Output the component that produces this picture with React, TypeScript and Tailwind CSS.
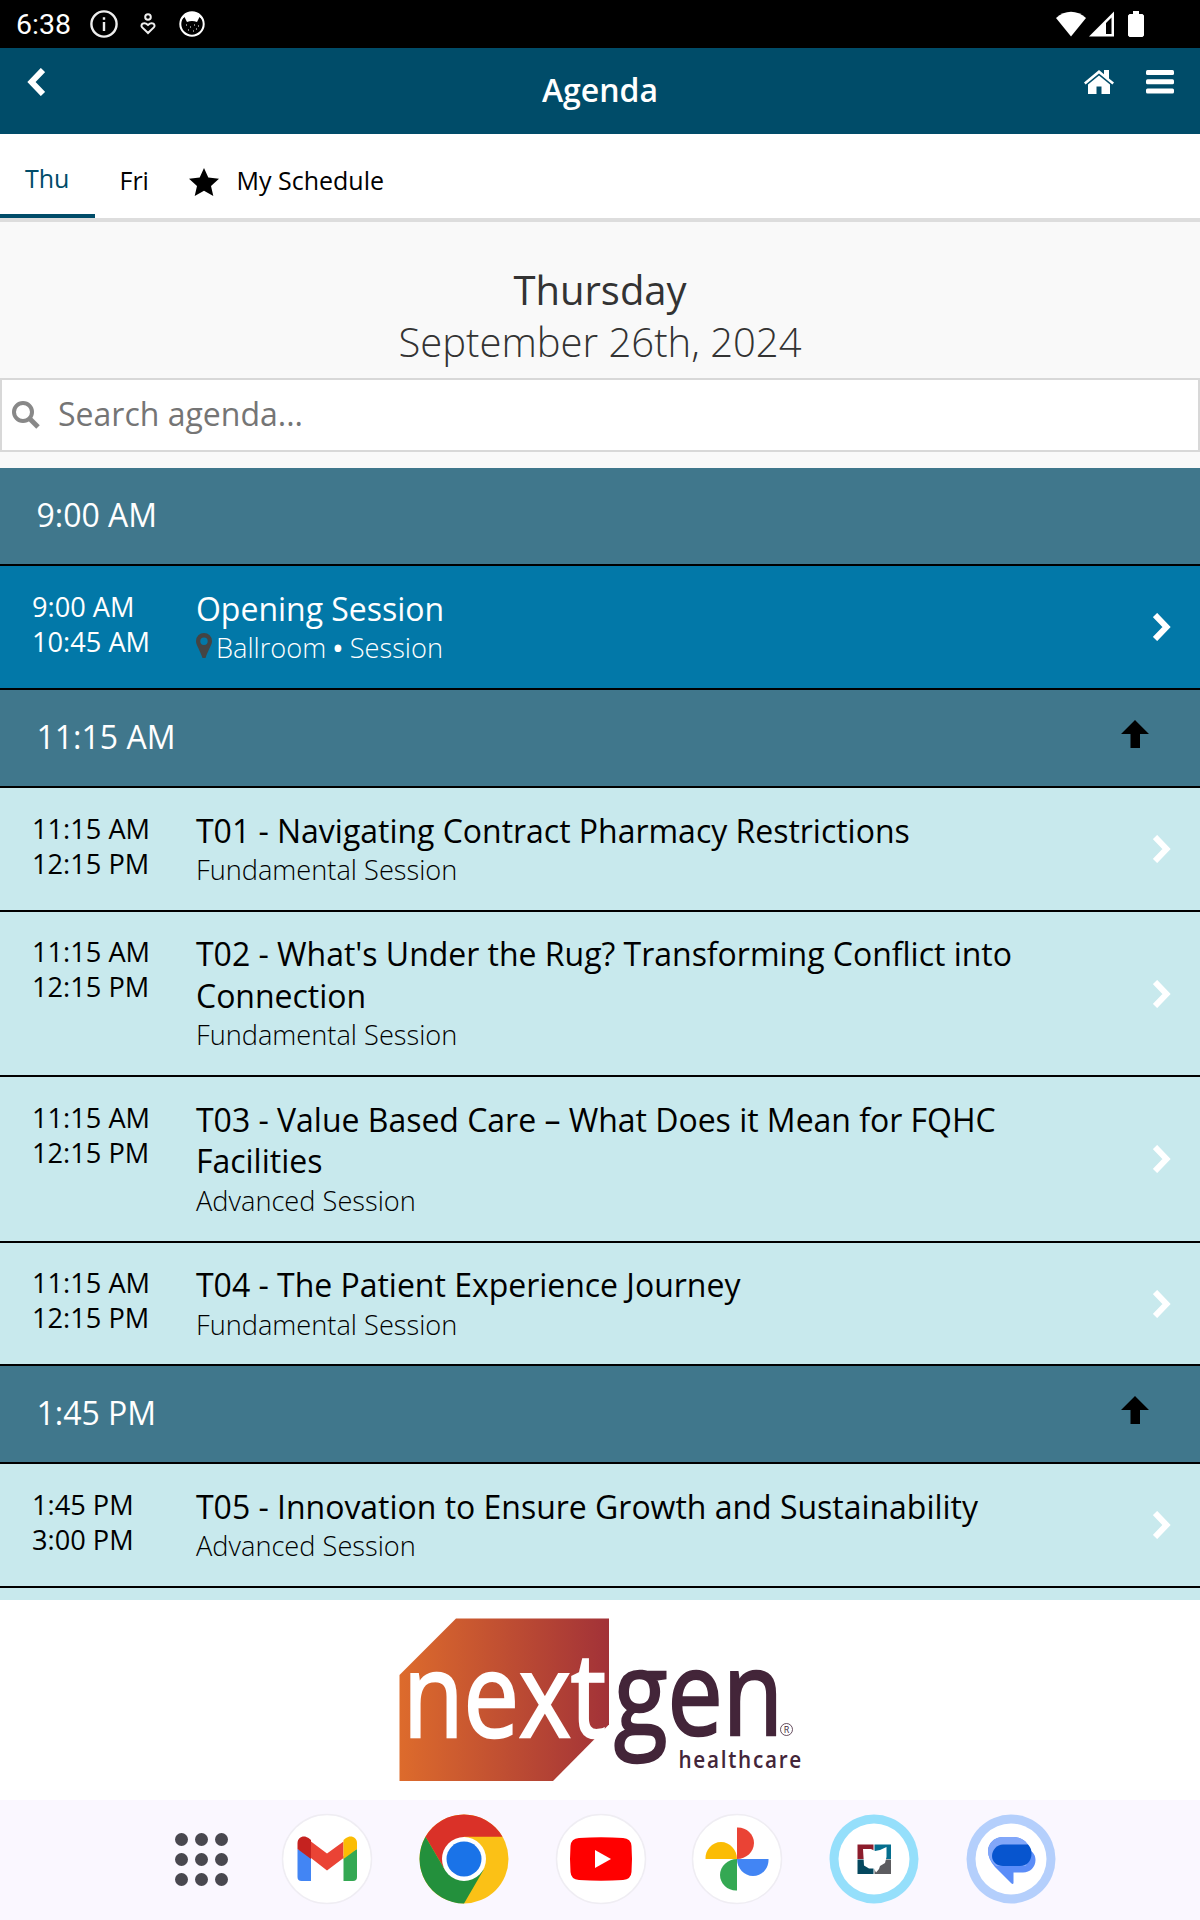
import React from 'react';

type Session = {
    start: string;
    end: string;
    title: string;
    kind: string;
    location?: string;
    height: string;
    timePad: string;
    titlePad: string;
};

type Slot = {
    time: string;
    jump: boolean;
    sessions: Session[];
};

const regular = { height: 'h-[124px]', timePad: 'pt-[23px]', titlePad: 'pt-[22px]' };

const slots: Slot[] = [
    {
        time: '9:00 AM',
        jump: false,
        sessions: [
            { start: '9:00 AM', end: '10:45 AM', title: 'Opening Session', kind: 'Session', location: 'Ballroom', ...regular },
        ],
    },
    {
        time: '11:15 AM',
        jump: true,
        sessions: [
            { start: '11:15 AM', end: '12:15 PM', title: 'T01 - Navigating Contract Pharmacy Restrictions', kind: 'Fundamental Session', ...regular },
            {
                start: '11:15 AM',
                end: '12:15 PM',
                title: "T02 - What's Under the Rug? Transforming Conflict into Connection",
                kind: 'Fundamental Session',
                height: 'h-[165px]',
                timePad: 'pt-[22px]',
                titlePad: 'pt-[21px] pb-px',
            },
            {
                start: '11:15 AM',
                end: '12:15 PM',
                title: 'T03 - Value Based Care – What Does it Mean for FQHC Facilities',
                kind: 'Advanced Session',
                height: 'h-[166px]',
                timePad: 'pt-[23px]',
                titlePad: 'pt-[21.600px] pb-px',
            },
            {
                start: '11:15 AM',
                end: '12:15 PM',
                title: 'T04 - The Patient Experience Journey',
                kind: 'Fundamental Session',
                height: 'h-[123px]',
                timePad: 'pt-[22px]',
                titlePad: 'pt-[21px] pb-px',
            },
        ],
    },
    {
        time: '1:45 PM',
        jump: true,
        sessions: [
            { start: '1:45 PM', end: '3:00 PM', title: 'T05 - Innovation to Ensure Growth and Sustainability', kind: 'Advanced Session', ...regular },
        ],
    },
];

function StatusBar() {
    return (
        <div className="flex h-12 shrink-0 items-center bg-black pl-4 font-[Roboto,sans-serif] text-white">
            <span className="w-[74px] pt-[3px] text-[28.500px] leading-none">6:38</span>
            <svg className="size-7" viewBox="0 0 28 28" fill="none" stroke="#eee" strokeWidth="2.4">
                <circle cx="14" cy="14" r="12.6" />
                <path d="M14 12v9M14 7.2v2.6" />
            </svg>
            <svg className="ml-[22px] h-[22px] w-4" viewBox="0 0 16 22" fill="none" stroke="#eee" strokeWidth="2">
                <circle cx="8" cy="4" r="2.8" />
                <path d="M8 20 2.2 14.4C-.2 11.6 3.8 8.2 8 12c4.2-3.8 8.2-.4 5.800 2.400z" />
            </svg>
            <svg className="ml-[23px] size-[26px]" viewBox="0 0 26 26">
                <circle cx="13" cy="13" r="11.700" fill="#000" stroke="#fff" strokeWidth="2" />
                <path d="M2 9C5-1 21-1 24 9L20.500 6 18 11Q13 9 8 11L5.500 6z" fill="#fff" />
                <path d="M7 14h1M11 16h1M15 14h1M19 15h1M9 19h1M14 20h1M17 18h1" stroke="#fff" />
            </svg>
            <svg className="ml-auto h-[26px] w-[30px]" viewBox="0 0 30 26" fill="#fff">
                <path d="M0 7C9-1.300 21-1.300 30 7L15 25.500z" />
            </svg>
            <svg className="ml-[3px] h-[26px] w-[25px]" viewBox="0 0 25 26" fill="#fff" fillRule="evenodd">
                <path d="M25 .5v25H0zM22.500 6.500 17 12v11h5.500z" />
            </svg>
            <svg className="ml-[14px] mr-14 h-[26px] w-4" viewBox="0 0 16 26" fill="#fff">
                <path d="M5 0h6v3h3.500L16 4.500v20L14.500 26h-13L0 24.500v-20L1.500 3H5z" />
            </svg>
        </div>
    );
}

function Header() {
    return (
        <header className="flex h-[86px] shrink-0 justify-between bg-[#004c69] text-white">
            <div className="w-40 pl-[27px] pt-5">
                <svg className="h-7 w-[18px]" viewBox="0 0 18 28" fill="none" stroke="#fff" strokeWidth="6">
                    <path d="M16 2 4.500 14 16 26" />
                </svg>
            </div>
            <h1 className="pt-[21px] text-[32px] font-semibold leading-[42px]">Agenda</h1>
            <div className="flex w-40 justify-end pr-[26px] pt-[22px]">
                <svg className="mr-8 h-6 w-[30px]" viewBox="0 0 30 24" fill="#fff">
                    <path d="M15 0l5 4.200V0h5v8.600L30 12.500 28.400 14.500 15 3.500 1.600 14.500 0 12.500z" />
                    <path d="M15 5.500 26 14.500V24h-8.500v-7.500h-5V24H4v-9.500z" />
                </svg>
                <svg className="h-6 w-7" viewBox="0 0 28 24" fill="#fff">
                    <rect width="28" height="5" rx="1.500" />
                    <rect y="9.300" width="28" height="5" rx="1.500" />
                    <rect y="18.600" width="28" height="5" rx="1.500" />
                </svg>
            </div>
        </header>
    );
}

function Tabs() {
    return (
        <nav className="flex h-[88px] shrink-0 border-b-4 border-[#ddd] bg-white text-[25px] leading-8 text-black">
            <div className="h-[84px] w-[95px] border-b-4 border-[#004c69] pl-[25px] pt-7 text-[#004c69]">Thu</div>
            <div className="w-[94px] pl-[24.500px] pt-[30px]">Fri</div>
            <svg className="mt-[34px] h-7 w-[30px]" viewBox="0 0 30 28">
                <path d="M15 0l4.300 9.600L30 10.700l-8 7.200L24.300 28 15 22.700 5.700 28 8 17.900 0 10.700l10.700-1.100z" />
            </svg>
            <div className="pl-[17.500px] pt-[30px]">My Schedule</div>
        </nav>
    );
}

function DayHeading() {
    return (
        <div className="h-[156px] shrink-0 pt-[42px] text-center text-[40px] leading-[52px] text-[#333]">
            <h2>Thursday</h2>
            <h3 className="font-light">September 26th, 2024</h3>
        </div>
    );
}

function SearchBox() {
    return (
        <div className="mb-4 flex h-[74px] shrink-0 items-center border-2 border-[#d8d8d8] bg-white pl-2.5">
            <svg className="size-7" viewBox="0 0 28 28" fill="none" stroke="#888">
                <circle cx="11" cy="11" r="9" strokeWidth="4" />
                <path d="M18 18l8 8" strokeWidth="5" />
            </svg>
            <span className="pb-0.5 pl-[18px] text-[32px] leading-[44px] text-[#757575]">Search agenda...</span>
        </div>
    );
}

function Chevron() {
    return (
        <svg className="mr-[29px] h-7 w-[18px] self-center" viewBox="0 0 18 28" fill="none" stroke="#fff" strokeWidth="6">
            <path d="M2 2l11.500 12L2 26" />
        </svg>
    );
}

function SlotBar({ time, jump }: { time: string; jump: boolean }) {
    return (
        <div className="flex h-[98px] shrink-0 justify-between border-b-2 border-black bg-[#40778c] pl-[36.500px] pr-[51px] text-[32px] leading-[94px] text-white">
            <span>{time}</span>
            {jump && (
                <svg className="mt-[30px] h-7 w-7" viewBox="0 0 28 28">
                    <path d="M14 0l14 14h-9v14H9.500V14H0z" />
                </svg>
            )}
        </div>
    );
}

function SessionRow({ session }: { session: Session }) {
    const general = session.location !== undefined;
    return (
        <div className={`flex shrink-0 border-b-2 border-black ${session.height} ${general ? 'bg-[#0278a8] text-white' : 'bg-[#c8e9ed] text-black'}`}>
            <div className={`w-[196px] pl-8 text-[27.200px] leading-[35px] ${session.timePad}`}>
                <div>{session.start}</div>
                <div>{session.end}</div>
            </div>
            <div className="w-[860px]">
                <div className={`text-[32px] leading-[41.600px] tracking-[-0.02px] ${session.titlePad}`}>{session.title}</div>
                <div className="flex text-[27.200px] font-light leading-9">
                    {general && (
                        <>
                            <svg className="mr-1 mt-[3px] h-[25px] w-4" viewBox="0 0 16 25" fill="#444" fillRule="evenodd">
                                <path d="M8 0a8 8 0 0 1 8 8c0 4-3 7-6.500 17h-3C3 15 0 12 0 8a8 8 0 0 1 8-8zm0 4.500a3.700 3.700 0 1 0 0 7.400 3.700 3.700 0 0 0 0-7.400z" />
                            </svg>
                            <span>{session.location}</span>
                            <span className="w-[23.500px] text-center font-semibold">•</span>
                        </>
                    )}
                    <span>{session.kind}</span>
                </div>
            </div>
            <div className="ml-auto flex">
                <Chevron />
            </div>
        </div>
    );
}

function Sponsor() {
    return (
        <div className="flex h-[200px] shrink-0 justify-center bg-white">
            <svg className="h-[200px] w-[440px]" viewBox="380 1600 440 200" fontFamily="'Open Sans', sans-serif">
                <defs>
                    <linearGradient id="brand">
                        <stop offset="0" stopColor="#dd6b2c" />
                        <stop offset="1" stopColor="#a23238" />
                    </linearGradient>
                </defs>
                <path d="M456 1618.500h153v106l-56 56.500H399.500v-106z" fill="url(#brand)" />
                <text x="403" y="1737" fill="#fff" stroke="#fff" strokeWidth="2.500" fontSize="117" textLength="203" lengthAdjust="spacingAndGlyphs">next</text>
                <g fill="#432539">
                    <text x="614" y="1735" stroke="#432539" strokeWidth="2.500" fontSize="117" textLength="169" lengthAdjust="spacingAndGlyphs">gen</text>
                    <text x="678.500" y="1768" fontSize="24" fontWeight="600" letterSpacing="2" textLength="124.500" lengthAdjust="spacingAndGlyphs">healthcare</text>
                </g>
                <circle cx="786.500" cy="1729.500" r="6" fill="none" stroke="#432539" strokeWidth=".8" />
                <text x="783.800" y="1733" fontSize="9" fill="#432539">R</text>
            </svg>
        </div>
    );
}

function GmailIcon() {
    return (
        <svg className="size-[92px]" viewBox="-46 -46 92 92">
            <circle r="44.500" fill="#fff" stroke="#efedf3" strokeWidth="1.500" />
            <path d="M-29.500-10V18a4 4 0 0 0 4 4h9.500V-3z" fill="#4285f4" />
            <path d="M30-10V18a4 4 0 0 1-4 4H16.500V-3z" fill="#34a853" />
            <path d="M-16-17.500 0-5.500 16.500-17.500V-1L0 11.500-16-1z" fill="#ea4335" />
            <path d="M-29.500-10v-6c0-6 6.500-8.500 11-5l2.500 2V0z" fill="#c5221f" />
            <path d="M30-10v-6c0-6-6.500-8.500-11-5l-2.500 2V0z" fill="#fbbc04" />
        </svg>
    );
}

function ChromeIcon() {
    return (
        <svg className="size-[92px]" viewBox="-46 -46 92 92">
            <circle r="44.500" fill="#fbc116" />
            <path d="M-38.500-22.250A44.500 44.500 0 0 1 38.500-22.250H0L-19 11z" fill="#da3128" />
            <path d="M-38.500-22.250A44.500 44.500 0 0 0 0 44.500L19.500 11H-19z" fill="#23903c" />
            <circle r="22" fill="#fff" />
            <circle r="17.500" fill="#1a73e8" />
        </svg>
    );
}

function YouTubeIcon() {
    return (
        <svg className="size-[92px]" viewBox="-46 -46 92 92">
            <circle r="44.500" fill="#fff" stroke="#efedf3" strokeWidth="1.500" />
            <path d="M-22-21Q0-22.500 22-21Q30-20.500 30.500-13Q31.500 0 30.500 13Q30 20.500 22 21Q0 22.500-22 21Q-30 20.500-30.500 13Q-31.500 0-30.500-13Q-30-20.500-22-21z" fill="#f00" />
            <path d="M-6-9 10 0-6 9z" fill="#fff" />
        </svg>
    );
}

function PhotosIcon() {
    return (
        <svg className="size-[92px]" viewBox="-46 -46 92 92">
            <circle r="44.500" fill="#fff" stroke="#efedf3" strokeWidth="1.500" />
            <path d="M0 0V-31.500C9-32 17-25 17-16S9 0 0 0z" fill="#ea4335" />
            <path d="M0 0H31.500C32 9 25 17 16 17S0 9 0 0z" fill="#4285f4" />
            <path d="M0 0V31.500C-9 32-17 25-17 16S-9 0 0 0z" fill="#34a853" />
            <path d="M0 0H-31.500C-32-9-25-17-16-17S0-9 0 0z" fill="#fbbc04" />
        </svg>
    );
}

function OhioIcon() {
    return (
        <svg className="size-[92px]" viewBox="-46 -46 92 92">
            <circle r="44.500" fill="#95dffb" />
            <circle r="35.500" fill="#fff" />
            <path d="M-16.500-14.500H-.5V0h-16z" fill="#8c1c2c" />
            <path d="M.5-14.500H17V0H.5z" fill="#056e8e" />
            <path d="M-16.500.5H-.5V15h-16z" fill="#05485f" />
            <path d="M.5.500H17V15H.5z" fill="#5c5c60" />
            <path d="M-11-10h8l4 2 5-1 6.500-3V-2L11 4 6 7 5 10 2 13.500l-2-4h-5l-5-3z" fill="#fff" />
        </svg>
    );
}

function MessagesIcon() {
    return (
        <svg className="size-[92px]" viewBox="-46 -46 92 92">
            <circle r="44.500" fill="#b4cffc" />
            <circle r="35.500" fill="#fff" />
            <path d="M-8-22H3C11-22 18-16 19-9C23-6 24.500-3 24.500 1 24.500 8 19 13.500 12 13.500H2.500V24Q2 26 0 24L-16 8Q-23 0-23-8C-23-16-16-22-8-22z" fill="#5b8df8" />
            <path d="M-8-22H3C11-22 18-16 19-9L15 7H-15Q-23 0-23-8C-23-16-16-22-8-22z" fill="#82a7f9" />
            <path d="M-8-14.500H17Q20.500-11 20.500-5.500C20.500 2 16 7 9 7H-8C-14 7-19 3-19-3C-19-9-14-14.500-8-14.500z" fill="#0755cf" />
        </svg>
    );
}

function Dock() {
    return (
        <div className="flex h-[120px] shrink-0 items-center justify-between bg-[#faf7ff] pb-0.5 pl-[175px] pr-[143px]">
            <div className="grid grid-cols-3 gap-[7px]">
                {Array.from({ length: 9 }, (_, i) => (
                    <span key={i} className="size-[13px] rounded-full bg-[#48474f]" />
                ))}
            </div>
            <div className="flex gap-[44.800px]">
                <GmailIcon />
                <ChromeIcon />
                <YouTubeIcon />
                <PhotosIcon />
                <OhioIcon />
                <MessagesIcon />
            </div>
        </div>
    );
}

export default function App() {
    return (
        <div className="flex h-[1920px] w-[1200px] flex-col overflow-hidden bg-[#f9f9f9] font-['Open_Sans',sans-serif]">
            <StatusBar />
            <Header />
            <Tabs />
            <DayHeading />
            <SearchBox />
            {slots.map((slot) => (
                <React.Fragment key={slot.time}>
                    <SlotBar time={slot.time} jump={slot.jump} />
                    {slot.sessions.map((session) => (
                        <SessionRow key={session.title} session={session} />
                    ))}
                </React.Fragment>
            ))}
            <div className="min-h-0 flex-1 bg-[#c8e9ed]" />
            <Sponsor />
            <Dock />
        </div>
    );
}
